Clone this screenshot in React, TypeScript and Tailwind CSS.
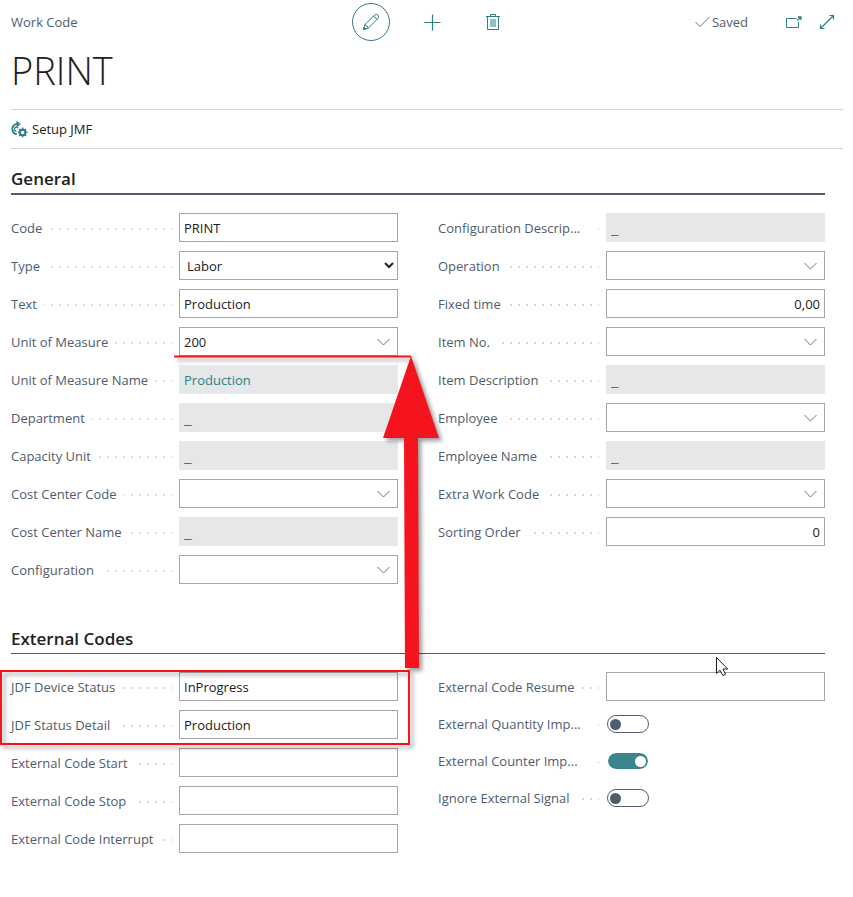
import { useId, useState } from 'react';
import type { ReactNode } from 'react';

const fieldBox = 'h-[29px] w-full border border-[#a6a6a6] bg-white text-[#212121] outline-none';

function Row({ id, label, toggle, children }: { id: string; label: string; toggle?: boolean; children: ReactNode }) {
  const shortened = label.endsWith('...');
  return (
    <div className={toggle ? 'mb-[9px] flex h-[28px] items-center' : 'mb-[9px] flex h-[29px] items-center'}>
      <div className="mr-[7px] w-[161px] shrink-0 bg-[linear-gradient(to_right,#d8dade_2px,transparent_2px)] bg-[length:8px_2px] bg-[position:0_11px] bg-repeat-x">
        <label
          htmlFor={id}
          className={`block w-fit bg-white leading-[22px] whitespace-nowrap text-[#505c6d] ${shortened ? 'pr-[14px]' : 'pr-[7px]'}`}
        >
          {label}
        </label>
      </div>
      <div className="min-w-0 flex-1">{children}</div>
    </div>
  );
}

function TextField({ label, value = '', numeric }: { label: string; value?: string; numeric?: boolean }) {
  const id = useId();
  return (
    <Row id={id} label={label}>
      <input id={id} type="text" defaultValue={value} className={`${fieldBox} px-1 ${numeric ? 'text-right' : ''}`} />
    </Row>
  );
}

function ReadOnlyField({ label, value = '_' }: { label: string; value?: string }) {
  const id = useId();
  return (
    <Row id={id} label={label}>
      <input
        id={id}
        type="text"
        readOnly
        value={value}
        className={`block h-[29px] w-full bg-[#e5e7e8] px-[5px] text-[#2f7d85] outline-none ${value === '_' ? 'text-[17px] leading-[22px]' : ''}`}
      />
    </Row>
  );
}

function LookupField({ label, value = '' }: { label: string; value?: string }) {
  const id = useId();
  return (
    <Row id={id} label={label}>
      <div className={`${fieldBox} flex items-center`}>
        <input id={id} type="text" defaultValue={value} className="h-full min-w-0 flex-1 px-1 outline-none" />
        <button type="button" aria-label={`Choose ${label}`} className="flex h-full w-7 items-center justify-center">
          <svg width="13" height="8" viewBox="0 0 13 8" fill="none" stroke="#757575" strokeWidth="1">
            <path d="M0.5 1 L6.5 7 L12.5 1" />
          </svg>
        </button>
      </div>
    </Row>
  );
}

function SelectField({ label, options }: { label: string; options: string[] }) {
  const id = useId();
  return (
    <Row id={id} label={label}>
      <select id={id} className={`${fieldBox} pl-[3px]`}>
        {options.map((option) => (
          <option key={option}>{option}</option>
        ))}
      </select>
    </Row>
  );
}

function ToggleField({ label, on = false }: { label: string; on?: boolean }) {
  const id = useId();
  const [checked, setChecked] = useState(on);
  return (
    <Row id={id} label={label} toggle>
      <div className="flex pl-px">
        <input
          id={id}
          type="checkbox"
          role="switch"
          checked={checked}
          onChange={() => setChecked(!checked)}
          className="flex h-[18px] w-[42px] appearance-none items-center rounded-full border border-[#505c6d] px-[2px] before:size-[11px] before:rounded-full before:bg-[#505c6d] before:content-[''] checked:justify-end checked:border-white checked:bg-[#3b858d] checked:bg-clip-padding checked:before:bg-white"
        />
      </div>
    </Row>
  );
}

function IconButton({ label, children, round }: { label: string; children: ReactNode; round?: boolean }) {
  return (
    <button
      type="button"
      aria-label={label}
      className={`flex size-[38px] items-center justify-center ${round ? 'rounded-full border border-[#2f7d85]' : ''}`}
    >
      {children}
    </button>
  );
}

function Header() {
  return (
    <header className="flex h-[44px] items-center">
      <div className="flex-1 text-[#505c6d]">Work Code</div>
      <div className="flex gap-[23px] pl-[18px]">
        <IconButton label="Edit" round>
          <svg width="18" height="18" viewBox="0 0 18 18" fill="none" stroke="#2f7d85" strokeWidth="1">
            <path d="M1.5 16.5 L2.8 11.8 L12.6 2 Q14.3 0.7 15.9 2.2 Q17.3 3.8 16 5.4 L6.2 15.2 Z M2.8 11.8 Q5.6 12.2 6.2 15.2 M11.3 3.4 Q14 4 14.7 6.7" />
            <path d="M1.5 16.5 L3.6 15.9 L2.1 14.4 Z" fill="#2f7d85" />
          </svg>
        </IconButton>
        <IconButton label="New">
          <svg width="17" height="17" viewBox="0 0 17 17" fill="none" stroke="#2f7d85" strokeWidth="1.2">
            <path d="M8.5 0.5 V16.5 M0.5 8.5 H16.5" />
          </svg>
        </IconButton>
        <IconButton label="Delete">
          <svg width="14" height="17" viewBox="0 0 14 17" fill="none" stroke="#2f7d85" strokeWidth="1">
            <path d="M0 2.5 H14 M4.5 2.5 V0.5 H9.5 V2.5 M1.5 2.5 V15.5 H12.5 V2.5" />
            <rect x="4" y="5" width="6" height="8" fill="#8fbfc3" stroke="none" />
          </svg>
        </IconButton>
      </div>
      <div className="flex flex-1 items-center justify-end pr-2 text-[#505c6d]">
        <svg className="mr-[2px]" width="15" height="12" viewBox="0 0 15 12" fill="none" stroke="#6b7280" strokeWidth="1">
          <path d="M0.5 6 L5 10.5 L14.5 1" />
        </svg>
        <span>Saved</span>
        <button type="button" aria-label="Open in new window" className="ml-[38px]">
          <svg width="16" height="13" viewBox="0 0 16 13" fill="none" stroke="#2f7d85" strokeWidth="1">
            <path d="M10.5 2.5 H0.5 V11.5 H12.5 V6" />
            <path d="M11 4.5 L14.5 1.5 M12 1 H15 V4" strokeWidth="1.3" />
          </svg>
        </button>
        <button type="button" aria-label="Expand" className="ml-[17px]">
          <svg width="16" height="16" viewBox="0 0 16 16" fill="none" stroke="#2f7d85" strokeWidth="1.2">
            <path d="M1.5 14.5 L14.5 1.5 M10.5 1.5 H14.5 V5.5 M1.5 10.5 V14.5 H5.5" />
          </svg>
        </button>
      </div>
    </header>
  );
}

function SetupIcon() {
  return (
    <svg width="17" height="17" viewBox="0 0 17 17" fill="none" stroke="#2f7d85">
      <path d="M5.8 13.2 A5.2 5.2 0 0 1 2.6 4.6 Q4.2 2.8 7 3" strokeWidth="1.8" />
      <path d="M5.3 0.6 L8.6 3 L5.6 5.6" strokeWidth="1.4" />
      <path d="M7.2 7.2 A2 2 0 1 0 5.4 10" strokeWidth="1.3" />
      <circle cx="11.6" cy="11.4" r="2.7" strokeWidth="1.9" />
      <path d="M11.6 6.6 V8.6 M11.6 14.2 V16.2 M6.9 11.4 H8.8 M14.4 11.4 H16.4 M8.2 8 L9.6 9.4 M13.6 13.4 L15 14.8 M15 8 L13.6 9.4 M9.6 13.4 L8.2 14.8" strokeWidth="1.7" />
    </svg>
  );
}

function Annotations() {
  return (
    <svg className="pointer-events-none absolute top-0 left-0" width="853" height="897" viewBox="0 0 853 897" fill="none">
      <g className="drop-shadow-[3px_3px_2px_rgba(0,0,0,0.4)]">
        <path d="M174 356.5 H411" stroke="#f5141e" strokeWidth="2" />
        <path d="M411 356 L439 438 H418 L419 668 H405 L404 438 H383 Z" fill="#f5141e" />
        <rect x="1" y="671" width="408" height="73" stroke="#f5141e" strokeWidth="2" />
      </g>
      <path d="M716.5 657.5 V673.5 L720 670.2 L722.8 675.5 L725.5 674.2 L723 669 H727.7 Z" fill="white" stroke="#1d1d2b" strokeWidth="1" />
    </svg>
  );
}

export default function App() {
  return (
    <main className="relative min-h-screen bg-white pr-[10px] pl-[11px] font-['Open_Sans','Noto_Sans',sans-serif] text-[13px] leading-[22px]">
      <Header />
      <h1 className="mb-[13px] text-[38px] leading-[52px] font-light text-[#212121]">PRINT</h1>
      <div className="flex h-[40px] items-center border-y border-[#d0d4d9]">
        <button type="button" className="flex items-center gap-[4px] text-[#212121]">
          <SetupIcon />
          Setup JMF
        </button>
      </div>
      <div className="pr-[18px]">
        <section>
          <h2 className="mt-[16px] mb-[18px] h-[30px] border-b-2 border-[#505c6d] text-[17px] leading-[28px] font-semibold text-[#212121]">General</h2>
          <div className="grid grid-cols-2 gap-x-10">
            <div>
              <TextField label="Code" value="PRINT" />
              <SelectField label="Type" options={['Labor']} />
              <TextField label="Text" value="Production" />
              <LookupField label="Unit of Measure" value="200" />
              <ReadOnlyField label="Unit of Measure Name" value="Production" />
              <ReadOnlyField label="Department" />
              <ReadOnlyField label="Capacity Unit" />
              <LookupField label="Cost Center Code" />
              <ReadOnlyField label="Cost Center Name" />
              <LookupField label="Configuration" />
            </div>
            <div>
              <ReadOnlyField label="Configuration Descrip..." />
              <LookupField label="Operation" />
              <TextField label="Fixed time" value="0,00" numeric />
              <LookupField label="Item No." />
              <ReadOnlyField label="Item Description" />
              <LookupField label="Employee" />
              <ReadOnlyField label="Employee Name" />
              <LookupField label="Extra Work Code" />
              <TextField label="Sorting Order" value="0" numeric />
            </div>
          </div>
        </section>
        <section>
          <h2 className="mt-[32px] mb-[18px] h-[29px] border-b border-[#505c6d] text-[17px] leading-[28px] font-semibold text-[#212121]">External Codes</h2>
          <div className="grid grid-cols-2 gap-x-10">
            <div>
              <TextField label="JDF Device Status" value="InProgress" />
              <TextField label="JDF Status Detail" value="Production" />
              <TextField label="External Code Start" />
              <TextField label="External Code Stop" />
              <TextField label="External Code Interrupt" />
            </div>
            <div>
              <TextField label="External Code Resume" />
              <ToggleField label="External Quantity Imp..." />
              <ToggleField label="External Counter Imp..." on />
              <ToggleField label="Ignore External Signal" />
            </div>
          </div>
        </section>
      </div>
      <Annotations />
    </main>
  );
}
